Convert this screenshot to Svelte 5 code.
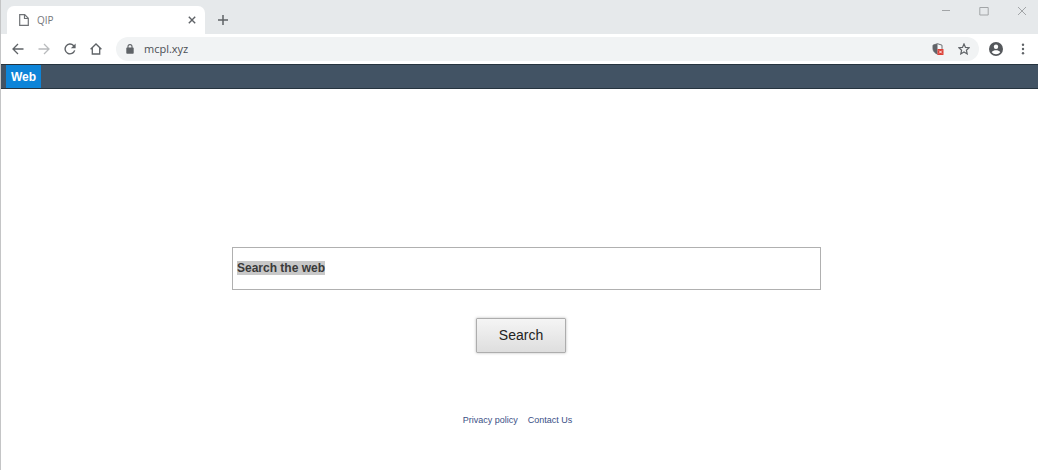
<script>
  import { onMount } from 'svelte';

  let query = $state('Search the web');
  let field;

  onMount(() => {
    field.focus();
    field.select();
  });
</script>

<div class="window">
  <header class="tabs">
    <div class="tab">
      <svg width="10" height="12" viewBox="0 0 10 12" fill="none" stroke="#6f7276" stroke-width="1.2">
        <path d="M.7.7h5l3.6 3.6v7H.7z" /><path d="M5.500.9v3.600h3.600" />
      </svg>
      <span class="tab-title">QIP</span>
      <button aria-label="Close tab">
        <svg width="8" height="8" viewBox="0 0 8 8" stroke="#5f6367" stroke-width="1.4"><path d="M.8.8l6.400 6.400M7.200.8L.8 7.200" /></svg>
      </button>
    </div>
    <button class="new-tab" aria-label="New tab">
      <svg width="10" height="10" viewBox="0 0 10 10" stroke="#5f6367" stroke-width="1.5"><path d="M5 0v10M0 5h10" /></svg>
    </button>
    <div class="controls">
      <button aria-label="Minimize"><svg width="10" height="10" viewBox="0 0 10 10" stroke="#a2a5a7"><path d="M1 4.500h8" /></svg></button>
      <button aria-label="Maximize"><svg width="10" height="10" viewBox="0 0 10 10" fill="none" stroke="#a2a5a7"><path d="M.8 1.500h8.400v7.500H.8z" /></svg></button>
      <button aria-label="Close"><svg width="10" height="10" viewBox="0 0 10 10" stroke="#a2a5a7"><path d="M1 1l8 8M9 1L1 9" /></svg></button>
    </div>
  </header>

  <nav class="toolbar" aria-label="Browser">
    <div class="navigation">
      <button aria-label="Back">
        <svg width="12" height="12" viewBox="0 0 12 12" fill="none" stroke="#5f6367" stroke-width="1.3"><path d="M11.500 6H1.200M6 1L1 6l5 5" /></svg>
      </button>
      <button aria-label="Forward">
        <svg width="12" height="12" viewBox="0 0 12 12" fill="none" stroke="#b9bbbd" stroke-width="1.3"><path d="M.5 6h10.300M6 1l5 5-5 5" /></svg>
      </button>
      <button aria-label="Reload">
        <svg width="12" height="12" viewBox="0 0 12 12" fill="none" stroke="#5f6367" stroke-width="1.4"><path d="M10.700 7.400A4.900 4.900 0 1 1 9.500 2.500L10.500 3.500" /><path d="M11.600.5v4.700H6.900z" fill="#5f6367" stroke="none" /></svg>
      </button>
      <button aria-label="Home">
        <svg width="12" height="12" viewBox="0 0 12 12" fill="none" stroke="#5f6367" stroke-width="1.3"><path d="M.6 6.200L6 1l5.400 5.200M2.300 5v6h7.400V5" /></svg>
      </button>
    </div>
    <div class="address">
      <svg width="8" height="10" viewBox="0 0 8 10"><rect x=".3" y="3.600" width="7.400" height="6.200" rx=".8" fill="#5f6367" /><path d="M2 4V2.600a2 2 0 0 1 4 0V4" fill="none" stroke="#5f6367" stroke-width="1.100" /></svg>
      <span class="url">mcpl.xyz</span>
      <div class="address-actions">
        <button aria-label="Blocked content">
          <svg width="12" height="12" viewBox="0 0 12 12">
            <path d="M5.500.7l4.500 1.500v3.500c0 2.500-2 4.400-4.500 5.500C3 10.100 1 8.200 1 5.700V2.200z" fill="#f6f7f8" stroke="#6b6e72" />
            <path d="M5.500.7v10.500C3 10.100 1 8.200 1 5.700V2.200z" fill="#606368" />
            <rect x="5.500" y="6" width="6" height="6" rx=".6" fill="#dc4037" /><path d="M7.200 7.700l2.600 2.600M9.800 7.700l-2.600 2.600" stroke="#fff" stroke-width=".9" />
          </svg>
        </button>
        <button aria-label="Bookmark this page">
          <svg width="12" height="12" viewBox="0 0 12 12" fill="none" stroke="#5f6367" stroke-width="1.200"><path d="M6 .9l1.500 3.500 3.700.3-2.800 2.500.8 3.700L6 9l-3.200 1.900.8-3.700L.8 4.700l3.700-.3z" /></svg>
        </button>
      </div>
    </div>
    <button aria-label="Profile">
      <svg width="14" height="14" viewBox="0 0 14 14"><circle cx="7" cy="7" r="7" fill="#55585c" /><circle cx="7" cy="4.700" r="2.200" fill="#fff" /><path d="M2.700 10.200C3.600 8.800 5.300 8.300 7 8.300s3.400.5 4.300 1.900A5.300 5.300 0 0 1 7 12.300a5.300 5.300 0 0 1-4.300-2.100z" fill="#fff" /></svg>
    </button>
    <button aria-label="Menu">
      <svg width="20" height="12" viewBox="-4 0 20 12" fill="#5f6367"><circle cx="6" cy="1.700" r="1.200" /><circle cx="6" cy="6" r="1.200" /><circle cx="6" cy="10.300" r="1.200" /></svg>
    </button>
  </nav>

  <nav class="site-bar" aria-label="Search type"><a href="#web">Web</a></nav>

  <main>
    <form onsubmit={(e) => e.preventDefault()}>
      <div class="field-row">
        <input aria-label="Search the web" type="text" bind:value={query} bind:this={field} />
      </div>
      <div class="button-row"><button class="search">Search</button></div>
    </form>
    <footer>
      <a href="#privacy">Privacy policy</a>
      <a href="#contact">Contact Us</a>
    </footer>
  </main>
</div>

<style>
  :global(body) {
    margin: 0;
    background: #fff;
  }
  .window {
    box-sizing: border-box;
    min-height: 100vh;
    border-left: 1px solid #c4c5c6;
    font-family: "Liberation Sans", Arial, sans-serif;
  }
  button {
    display: flex;
    align-items: center;
    justify-content: center;
    padding: 0;
    border: 0;
    background: none;
    font: inherit;
  }
  svg {
    display: block;
    flex: none;
  }
  .tabs {
    display: flex;
    align-items: flex-end;
    height: 34px;
    padding-left: 6px;
    background: #e6e9eb;
  }
  .tab {
    box-sizing: border-box;
    display: flex;
    align-items: center;
    width: 198px;
    height: 28px;
    padding: 0 9px 0 12px;
    border-radius: 7px 7px 0 0;
    background: #fff;
  }
  .tab-title {
    flex: 1;
    padding-left: 8px;
    font: 10px/16px "Open Sans", sans-serif;
    color: #75787c;
  }
  .new-tab {
    width: 36px;
    height: 28px;
  }
  .controls {
    display: flex;
    align-self: flex-start;
    gap: 28px;
    margin-left: auto;
    padding: 6px 11px 0 0;
  }
  .toolbar {
    display: flex;
    align-items: center;
    gap: 10px;
    height: 30px;
    padding: 0 5px 0 11px;
    background: #fff;
  }
  .navigation {
    display: flex;
    gap: 14px;
    padding-right: 4px;
  }
  .address {
    flex: 1;
    display: flex;
    align-items: center;
    gap: 10px;
    height: 24px;
    padding: 0 9px 0 10px;
    border-radius: 12px;
    background: #f1f3f4;
  }
  .url {
    flex: 1;
    font: 11px/16px "Open Sans", sans-serif;
    color: #4c5054;
  }
  .address-actions {
    display: flex;
    gap: 14px;
  }
  .site-bar {
    box-sizing: border-box;
    display: flex;
    height: 25px;
    padding-left: 5px;
    border: solid #26343f;
    border-width: 1px 0;
    background: #425364;
  }
  .site-bar a {
    padding: 0 5px;
    background: #0d84d8;
    color: #fff;
    font-size: 12px;
    font-weight: bold;
    line-height: 24px;
    text-decoration: none;
  }
  main {
    padding-top: 158px;
  }
  .field-row {
    display: flex;
    justify-content: center;
    padding-left: 14px;
  }
  input {
    box-sizing: border-box;
    width: 100%;
    max-width: 589px;
    height: 43px;
    padding: 0 4px 2px;
    border: 1px solid #b0b0b0;
    border-radius: 0;
    outline: 0;
    background: #fff;
    color: #3a3a3a;
    font: bold 12px "Liberation Sans", Arial, sans-serif;
  }
  input::selection {
    background: #c8c8c8;
    color: #3a3a3a;
  }
  .button-row {
    display: flex;
    justify-content: center;
    padding: 28px 0 0 3px;
  }
  .search {
    box-sizing: border-box;
    width: 90px;
    height: 35px;
    padding-bottom: 2px;
    border: 1px solid #adadad;
    border-radius: 1px;
    background: linear-gradient(#f5f5f5, #dedede);
    box-shadow: 0 0 3px #bbb;
    color: #222;
    font-size: 14px;
  }
  footer {
    display: flex;
    justify-content: center;
    gap: 10px;
    padding: 60px 4px 0 0;
  }
  footer a {
    color: #3a4f85;
    font-size: 9px;
    line-height: 14px;
    text-decoration: none;
  }
</style>
